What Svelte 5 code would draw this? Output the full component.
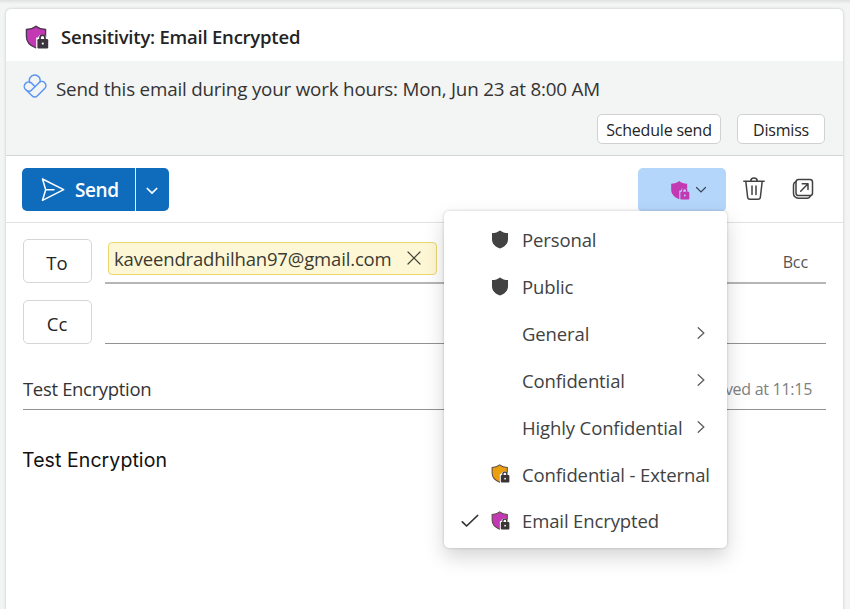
<script>
    let menuOpen = true;
    let selected = 'Email Encrypted';

    const labels = [
        {name: 'Personal', icon: 'plain'},
        {name: 'Public', icon: 'plain'},
        {name: 'General', submenu: true},
        {name: 'Confidential', submenu: true},
        {name: 'Highly Confidential', submenu: true},
        {name: 'Confidential - External', icon: 'lock', color: '#eaa00e'},
        {name: 'Email Encrypted', icon: 'lock', color: '#c239b3'}
    ];

    function select(label) {
        if (!label.submenu) {
            selected = label.name;
        }
    }
</script>

{#snippet shield(fill, edge, lock, halo, size)}
    <svg class="icon" width={size} height={size} viewBox="0 0 24 24">
        <path d="M11 1.2C13.6 3.3 16.6 4.3 20.6 4.5V11.5C20.6 17 17 20.8 11 23C5 20.8 1.4 17 1.4 11.5V4.5C5.4 4.3 8.4 3.3 11 1.2Z" {fill} stroke={edge} stroke-width="1.3"/>
        {#if lock}
            <path d="M11.2 24V12.6H13.2C13.3 8.6 21.2 8.6 21.4 12.6H24V24Z" fill={halo}/>
            <path d="M15 14.5V12.9A2.5 2.7 0 0 1 20 12.9V14.5" fill="none" stroke={lock} stroke-width="1.7"/>
            <rect x="12.4" y="14" width="10.8" height="9.4" rx="1.2" fill={lock}/>
            <circle cx="17.8" cy="18.6" r="1.1" fill={halo}/>
        {/if}
    </svg>
{/snippet}

<main>
    <div class="card">
        <header>
            {@render shield('#c239b3', '#4b3550', '#3b3540', '#ffffff', 24)}
            <h1>Sensitivity: Email Encrypted</h1>
        </header>

        <section class="tip">
            <div class="tip-text">
                <svg class="icon" width="24" height="24" viewBox="0 0 24 24" fill="none" stroke="#5b95f2" stroke-width="1.5" stroke-linejoin="round" stroke-linecap="round">
                    <path d="M6.8 8.6A5.4 5.4 0 1 1 17 7.6"/>
                    <path d="M11.6 12.2L9 9.6A4.3 4.3 0 0 0 2.3 15.2L9.3 22A3.4 3.4 0 0 0 14.2 22L21.7 14.5A4 4 0 0 0 16 8.7L8.7 16A3.5 3.5 0 0 1 3.3 16"/>
                </svg>
                <span>Send this email during your work hours: Mon, Jun 23 at 8:00 AM</span>
            </div>
            <div class="tip-actions">
                <button class="small schedule">Schedule send</button>
                <button class="small dismiss">Dismiss</button>
            </div>
        </section>

        <nav>
            <div class="send">
                <button class="send-main">
                    <svg width="24" height="24" viewBox="0 0 24 24" fill="none" stroke="#ffffff" stroke-width="1.5" stroke-linejoin="round" stroke-linecap="round">
                        <path d="M1.5 1L22.7 11.7L1.5 22.3L4.7 11.7ZM4.7 11.7H13"/>
                    </svg>
                    <span>Send</span>
                </button>
                <button class="send-more" aria-label="More send options">
                    <svg width="12" height="8" viewBox="0 0 12 8" fill="none" stroke="#ffffff" stroke-width="1.7" stroke-linecap="round" stroke-linejoin="round">
                        <path d="M1.3 1.5L6 6.2L10.7 1.5"/>
                    </svg>
                </button>
            </div>
            <div class="tools">
                <div class="picker">
                    <button class="picker-button" aria-label="Sensitivity" on:click={() => menuOpen = !menuOpen}>
                        {@render shield('#c239b3', 'none', '#c239b3', '#b4d6fa', 20)}
                        <svg width="12" height="8" viewBox="0 0 12 8" fill="none" stroke="#38475a" stroke-width="1.2" stroke-linecap="round">
                            <path d="M1.5 1.5L6 6L10.5 1.5"/>
                        </svg>
                    </button>
                    {#if menuOpen}
                        <div class="menu">
                            {#each labels as label}
                                <button class="item" on:click={() => select(label)}>
                                    <span class="check">
                                        {#if label.name === selected}
                                            <svg width="18" height="14" viewBox="0 0 18 14" fill="none" stroke="#333333" stroke-width="1.7" stroke-linecap="round" stroke-linejoin="round">
                                                <path d="M1.3 7.8L5.6 12L16.6 1.5"/>
                                            </svg>
                                        {/if}
                                    </span>
                                    <span class="mark">
                                        {#if label.icon === 'plain'}
                                            <svg width="18" height="19" viewBox="0 0 18 19">
                                                <path d="M9 .5C11.2 2.2 13.8 3 17 3.1V9.3C17 13.6 14 16.9 9 18.5C4 16.9 1 13.6 1 9.3V3.1C4.2 3 6.8 2.2 9 .5Z" fill="#424242"/>
                                            </svg>
                                        {:else if label.icon === 'lock'}
                                            {@render shield(label.color, '#5b4a46', '#3b3536', '#ffffff', 19)}
                                        {/if}
                                    </span>
                                    <span class="name">{label.name}</span>
                                    {#if label.submenu}
                                        <svg class="arrow" width="8" height="14" viewBox="0 0 8 14" fill="none" stroke="#5c5c5c" stroke-width="1.3" stroke-linecap="round">
                                            <path d="M1.2 1.8L6.8 7L1.2 12.2"/>
                                        </svg>
                                    {/if}
                                </button>
                            {/each}
                        </div>
                    {/if}
                </div>
                <svg class="trash" width="24" height="24" viewBox="0 0 24 24" fill="none" stroke="#424242" stroke-width="1.5" stroke-linecap="round" stroke-linejoin="round">
                    <path d="M1.8 4.2H22.2M8.8 4A3.2 3 0 0 1 15.2 4M3.8 4.4L5.6 20A2.5 2.5 0 0 0 8 22.3H16A2.5 2.5 0 0 0 18.4 20L20.2 4.4M10 9V17.5M14 9V17.5"/>
                </svg>
                <svg class="popout" width="22" height="22" viewBox="0 0 22 22" fill="none" stroke="#424242" stroke-width="1.5" stroke-linecap="round" stroke-linejoin="round">
                    <rect x="4" y="1.5" width="16.5" height="16" rx="2.6"/>
                    <path d="M3.8 3.7C2.3 4.3 1.5 5.4 1.5 7V15.5A4.7 4.7 0 0 0 6.2 20.2H15C16.7 20.2 17.9 19.3 18.5 17.8M8.7 13.2L15.8 6M10.3 5.8H16V11.5"/>
                </svg>
            </div>
        </nav>

        <div class="form">
            <div class="row to">
                <button class="field">To</button>
                <div class="line">
                    <span class="chip">
                        <span>kaveendradhilhan97@gmail.com</span>
                        <svg width="14" height="14" viewBox="0 0 14 14" stroke="#45453a" stroke-width="1.2" stroke-linecap="round">
                            <path d="M1 1L13 13M13 1L1 13"/>
                        </svg>
                    </span>
                    <span class="bcc">Bcc</span>
                </div>
            </div>
            <div class="row cc">
                <button class="field">Cc</button>
                <div class="line"></div>
            </div>
            <div class="subject">
                <span>Test Encryption</span>
                <span class="saved">Draft saved at 11:15</span>
            </div>
            <p>Test Encryption</p>
        </div>
    </div>
</main>

<style>
    :global(body) {
        background: #f3f4f4;
        overflow: hidden;
    }

    main {
        height: 609px;
        box-sizing: border-box;
        padding: 9px 7px 0 6px;
        background: linear-gradient(#dfe1e1, #f3f4f4 4px);
        font-family: "Open Sans", "Noto Sans", sans-serif;
        color: #333333;
    }

    button {
        margin: 0;
        padding: 0;
        border: none;
        box-sizing: border-box;
        background: none;
        color: inherit;
        font: inherit;
        letter-spacing: inherit;
        cursor: pointer;
    }

    svg {
        display: block;
        flex: none;
    }

    .card {
        height: 620px;
        border-radius: 5px;
        background: #ffffff;
        box-shadow: 0 0 3px rgba(0, 0, 0, 0.22);
    }

    header {
        display: flex;
        align-items: center;
        height: 52px;
        padding: 4px 0 0 19px;
        box-sizing: border-box;
    }

    h1 {
        margin: 0 0 2px 12px;
        color: #242424;
        font-size: 18.5px;
        font-weight: 600;
        letter-spacing: -0.22px;
    }

    .tip {
        height: 95px;
        padding: 13px 18px 0 17px;
        box-sizing: border-box;
        border-bottom: 1px solid #d4d5d5;
        background: #f3f4f4;
    }

    .tip-text {
        display: flex;
        height: 30px;
        font-size: 18.8px;
        line-height: 30px;
        letter-spacing: -0.19px;
        white-space: nowrap;
    }

    .tip-text span {
        margin-left: 9px;
    }

    .tip-actions {
        display: flex;
        justify-content: flex-end;
        gap: 16px;
        margin-top: 10px;
    }

    .small {
        height: 30px;
        padding-top: 1px;
        border: 1px solid #d1d1d1;
        border-radius: 5px;
        background: #ffffff;
        color: #242424;
        font-size: 16px;
        letter-spacing: -0.2px;
    }

    .schedule {
        width: 124px;
    }

    .dismiss {
        width: 88px;
    }

    nav {
        display: flex;
        justify-content: space-between;
        height: 67px;
        padding: 12px 29px 0 16px;
        box-sizing: border-box;
        border-bottom: 1px solid #e1e1e1;
    }

    .send {
        display: flex;
        height: 43px;
        border-radius: 5px;
        background: #0f6cbd;
        color: #ffffff;
    }

    .send-main {
        display: flex;
        align-items: center;
        gap: 10px;
        width: 114px;
        padding-left: 19px;
        border-right: 1px solid #e8f1f9;
        font-size: 19px;
        font-weight: 600;
        letter-spacing: -0.4px;
    }

    .send-more {
        display: flex;
        align-items: center;
        justify-content: center;
        width: 33px;
        padding: 2px 2px 0 0;
    }

    .tools {
        display: flex;
        align-items: center;
        height: 43px;
    }

    .picker {
        position: relative;
    }

    .picker-button {
        display: flex;
        align-items: center;
        gap: 5px;
        width: 88px;
        height: 43px;
        padding-left: 32px;
        border-radius: 5px 5px 4px 4px;
        background: #b4d6fa;
    }

    .trash {
        margin: 0 0 2px 16px;
    }

    .popout {
        margin: 0 0 1px 26px;
    }

    /* flyout hangs from the right edge of the picker */
    .menu {
        position: absolute;
        top: 43px;
        right: -1px;
        z-index: 2;
        width: 283px;
        height: 337px;
        padding-top: 6px;
        box-sizing: border-box;
        border-radius: 5px;
        background: #ffffff;
        box-shadow: 0 0 3px rgba(0, 0, 0, 0.2), 0 9px 20px rgba(0, 0, 0, 0.17);
    }

    .item {
        display: flex;
        align-items: center;
        width: 100%;
        height: 46.85px;
        padding-left: 17px;
        color: #424242;
        font-size: 18.5px;
        letter-spacing: -0.12px;
        text-align: left;
        white-space: nowrap;
    }

    .check {
        width: 30px;
    }

    .mark {
        width: 31px;
        margin-top: -2px;
    }

    .name {
        margin-bottom: 1px;
    }

    .arrow {
        margin: 0 22px 2px auto;
    }

    .form {
        padding: 16px 17px 0;
    }

    .row {
        display: flex;
        justify-content: space-between;
    }

    .field {
        width: 69px;
        height: 44px;
        padding: 2px 1px 0 0;
        border: 1px solid #d6d6d6;
        border-radius: 5px;
        color: #242424;
        font-size: 18.5px;
        font-weight: 500;
    }

    .line {
        display: flex;
        justify-content: space-between;
        width: 721px;
        height: 44px;
        box-sizing: border-box;
        border-bottom: 1px solid #929292;
    }

    .to .line {
        height: 45px;
        border-bottom: 2px solid #b5b5b5;
    }

    .cc {
        margin-top: 16px;
    }

    .chip {
        display: flex;
        align-items: center;
        justify-content: space-between;
        width: 329px;
        height: 33px;
        margin: 3px 0 0 3px;
        padding: 0 15px 1px 5px;
        box-sizing: border-box;
        border: 1px solid #ead771;
        border-radius: 4px;
        background: #fef7d6;
        color: #3b3b32;
        font-size: 18.5px;
        letter-spacing: -0.16px;
    }

    .bcc {
        margin: 12px 18px 0 0;
        color: #555555;
        font-size: 16px;
        line-height: 22px;
        letter-spacing: -0.1px;
    }

    .subject {
        display: flex;
        justify-content: space-between;
        height: 66px;
        padding-top: 30px;
        box-sizing: border-box;
        border-bottom: 1px solid #929292;
        font-size: 18.5px;
        line-height: 30px;
        letter-spacing: -0.33px;
    }

    .saved {
        margin-right: 14px;
        color: #808080;
        font-size: 16px;
        letter-spacing: -0.28px;
    }

    p {
        margin: 35px 0 0 -1px;
        color: #111111;
        font-family: Inter, sans-serif;
        font-size: 19.5px;
        line-height: 30px;
        letter-spacing: 0.08px;
    }
</style>
